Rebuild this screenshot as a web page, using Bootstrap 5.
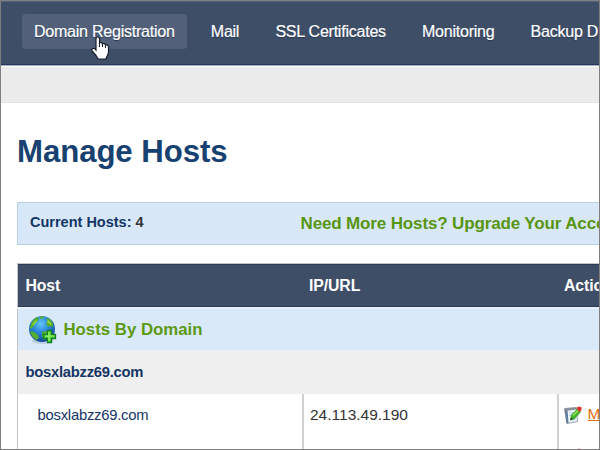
<!DOCTYPE html>
<html lang="en">
<head>
<meta charset="utf-8">
<meta name="viewport" content="width=device-width, initial-scale=1">
<title>Manage Hosts</title>
<link href="https://cdn.jsdelivr.net/npm/bootstrap@5.3.0/dist/css/bootstrap.min.css" rel="stylesheet">
<style>
body{font-family:"Liberation Sans",Arial,sans-serif;color:#333}
.frame{width:600px;height:450px;border:1px solid #7f7f7f;background:#fff}
.topnav{height:64px;background:#3f4e67;border-bottom:1px solid #22375a;padding:12px 0 0 21px;box-shadow:0 1px #a5afbf,0 2px #f8f9fa;border-top:1px solid #52637c}
.topnav .nav-link{height:35px;line-height:35px;font-size:16px;color:#fff;padding:0 12px;margin-right:12.200px;border-radius:4px;text-shadow:0 1px 1px #263752;letter-spacing:-.23px;-webkit-text-stroke:.2px #fff}
.topnav .nav-link.active{background:#52607a}
.subbar{height:38px;background:#ebebeb;border-bottom:1px solid #e3e3e3}
.page{width:760px;padding:0 16px}
h1{font-size:31.2px;line-height:36px;color:#174170;margin:31px 0 0;letter-spacing:-.08px}
.notice{height:43px;margin-top:32px;background:#d8e8f9;border:1px solid #b7d0e6}
.count{width:282.5px;font-size:14.5px;color:#143566;line-height:38px;padding-left:12px}
.count span{color:#333}
.promo{font-size:17px;color:#589510;line-height:41px;letter-spacing:-.14px}
.hosts{table-layout:fixed;width:728px;margin:18px 0 0;border:1px solid #c5c5c5;--bs-table-bg:transparent}
.hosts>:not(caption)>*>*{padding:0 0 0 7.500px;border:0;vertical-align:top}
.hosts thead th{height:44px;background:#3f4e67;color:#fff;font-size:15.8px;letter-spacing:-.1px;line-height:43px;border-bottom:2px solid #e7f0f8;box-shadow:inset 0 1px #2b3c59,inset 0 -1px #2b3c59}
.hosts thead th+th{padding-left:6.500px}
.hosts .section-row td{height:42px;background:#d9e9fa;color:#5c990f;font-size:16.8px;font-weight:700}
.hosts .section-row td>div{height:41px;padding-left:2px}
.hosts .section-row span{margin-left:6px}
.hosts .domain-row td{height:44px;background:#efefef;color:#143566;font-size:14.8px;letter-spacing:-.27px;font-weight:700;line-height:44px}
.hosts .host-row td{height:40px;font-size:15.5px;line-height:41px;border-left:2px solid #d1d1d1;color:#333}
.hosts .host-row td:first-child{border-left:0;padding-left:19.500px;color:#143566;font-size:14.8px;letter-spacing:-.23px;line-height:42px}
.hosts .host-row td:nth-child(2){padding-left:6.500px}
.hosts .host-row td:nth-child(3){padding-left:5.500px;line-height:40px}
.hosts .host-row a{color:#e46c0b;margin-left:5.500px}
.pointer{left:89px;top:35px}
</style>
</head>
<body class="overflow-hidden">
<svg class="d-none"><symbol id="edit" viewBox="0 0 18 18">
<path d="M.5 2.500l12-1 1 14L3 17.500z" fill="#edf5fb" stroke="#98a4af"/><path d="M.5 3l2 14.500 2-.5L3.500 3z" fill="#657f99"/><path d="M1 2.500l11-1 .3 2L1.500 5z" fill="#858d96"/><path d="M5 7l6-.5M5 9.500l4-.5M6 14l6-1" stroke="#b0cce2"/>
<path d="M6.500 14l1-5 6-6 3 3-6.500 7z" fill="#43ba29" stroke="#28841c" stroke-width=".7"/><path d="M9 9.500l5-5" stroke="#a2e75d" stroke-width="1.300"/><path d="M12.500 2l2-1.500 3 .7v3L15.500 6z" fill="#df3027"/><path d="M6.500 14l.6-2.500 1.700 1.500z" fill="#292929"/>
</symbol></svg>
<div class="frame position-relative overflow-hidden">
<nav class="topnav nav flex-nowrap text-nowrap position-relative">
<a class="nav-link active" href="#">Domain Registration</a>
<a class="nav-link" href="#">Mail</a>
<a class="nav-link" href="#">SSL Certificates</a>
<a class="nav-link" href="#">Monitoring</a>
<a class="nav-link" href="#">Backup DNS</a>
</nav>
<div class="subbar"></div>
<main class="page">
<h1 class="fw-bold">Manage Hosts</h1>
<div class="notice d-flex text-nowrap fw-bold"><div class="count">Current Hosts: <span>4</span></div><div class="promo">Need More Hosts? Upgrade Your Account</div></div>
<table class="table hosts">
<colgroup><col style="width:285px"><col style="width:255px"><col></colgroup>
<thead><tr><th>Host</th><th>IP/URL</th><th>Action</th></tr></thead>
<tbody>
<tr class="section-row"><td colspan="3"><div class="d-flex align-items-center">
<svg width="30" height="30" viewBox="0 0 30 30"><defs><radialGradient id="sea" cx=".45" cy=".3" r=".75"><stop stop-color="#65c5fa"/><stop offset=".5" stop-color="#237fd4"/><stop offset="1" stop-color="#123e8b"/></radialGradient></defs>
<ellipse cx="15" cy="26" rx="11" ry="3" fill="#8da9c4" opacity=".4"/><circle cx="14" cy="14" r="13" fill="url(#sea)"/>
<path d="M2 13C3 8 5 4 9 2l2 2-2 3-2 1-1 3-3 3zM11 2l4-1 1 2-3 1zM18 3l4 1 3 5v3l-3-1-2 1-2-4 2-2zM2 16l4 1 4 3 1 3-3 2c-3-2-5-5-6-9zM14 17l5-1 3 2-3 5-3 2-2-4z" fill="#56ae2d"/><path d="M4 10l4-5 1 1-3 4zM20 5l3 3v2l-4-3z" fill="#9adb3c"/>
<path d="M19.500 15.500h4v4h4v4h-4v4h-4v-4h-4v-4h4z" fill="#4bd237" stroke="#148022" stroke-width="1.300"/><path d="M21 17v9M17 21h9" stroke="#a4f375" stroke-width="1.200"/></svg>
<span>Hosts By Domain</span></div></td></tr>
<tr class="domain-row"><td colspan="3">bosxlabzz69.com</td></tr>
<tr class="host-row"><td>bosxlabzz69.com</td><td>24.113.49.190</td><td><svg width="18" height="18"><use href="#edit"/></svg><a href="#">Modify</a></td></tr>
<tr class="host-row"><td></td><td></td><td><svg width="18" height="18"><use href="#edit"/></svg></td></tr>
</tbody></table>
</main>
<svg class="pointer position-absolute" width="20" height="25" viewBox="0 0 20 25"><path d="M6 14V3c0-3 3.500-3 3.500 0v4c1-1 3-.5 3 1 1-1 3-.3 3 1.200 1.500-.7 3 .2 3 1.800v5c0 3-2 4-2.500 7H8c-1-3-3-5-5-7-3-3 .5-5 3-2z" fill="#fff" stroke="#171c2c" stroke-width="1.200"/><path d="M9.500 7v4M12.500 8v3M15.500 9.500V12" stroke="#171c2c"/></svg>
</div>
<script src="https://cdn.jsdelivr.net/npm/bootstrap@5.3.0/dist/js/bootstrap.bundle.min.js"></script>
</body>
</html>
